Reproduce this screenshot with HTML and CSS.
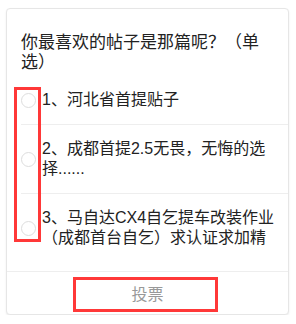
FILE: index.html
```html
<!DOCTYPE html>
<html lang="zh-CN">
<head>
    <meta charset="UTF-8">
    <meta name="viewport" content="width=device-width, initial-scale=1.0">
    <title>投票</title>
    <link rel="stylesheet" href="styles.css">
</head>
<body>

<div class="page">
    <!-- Vote card -->
    <div class="vote-card">
        <h2 class="vote-title">你最喜欢的帖子是那篇呢？（单选）</h2>
        <div class="options">
            <label class="option">
                <span class="radio"></span>
                <span class="option-text">1、河北省首提贴子</span>
            </label>
            <label class="option">
                <span class="radio"></span>
                <span class="option-text">2、成都首提2.5无畏，无悔的选择......</span>
            </label>
            <label class="option">
                <span class="radio"></span>
                <span class="option-text">3、马自达CX4自乞提车改装作业（成都首台自乞）求认证求加精</span>
            </label>
        </div>
        <div class="vote-footer">
            <button class="vote-btn">投票</button>
        </div>
    </div>

    <!-- annotation boxes -->
    <div class="mark mark-radios"></div>
    <div class="mark mark-button"></div>
</div>

</body>
</html>
```

FILE: styles.css
```css
body {
    margin: 0;
    background-color: #fff;
    font-family: "Liberation Sans", "Noto Sans CJK SC", sans-serif;
    color: #222;
}
.page {
    position: relative;
    padding: 8px 7px 0 6px;
}
.vote-card {
    border: 1px solid #e6e6e6;
    border-radius: 4px;
    box-shadow: 0 1px 2px rgba(0,0,0,0.08);
    background-color: #fff;
}
.vote-title {
    margin: 0 0 3px 0;
    padding: 24px 13px 0 14px;
    font-size: 17px;
    font-weight: normal;
    line-height: 20px;
}
.options {
    margin-left: 14px;
    padding-bottom: 9px;
}
.option {
    display: flex;
    align-items: center;
    gap: 6px;
    padding: 14px 13px 14px 0;
    border-bottom: 1px solid #eee;
    font-size: 16px;
    line-height: 20px;
}
.option:last-child {
    border-bottom: none;
}
.radio {
    flex: none;
    width: 13px;
    height: 13px;
    border: 1px solid #ddd;
    border-radius: 50%;
}
.vote-footer {
    border-top: 1px solid #eee;
    display: flex;
    justify-content: center;
}
.vote-btn {
    border: none;
    background: none;
    font-family: inherit;
    font-size: 16px;
    color: #999;
    height: 42px;
    padding: 0 20px;
}
.mark {
    position: absolute;
    border: 3px solid #ff3838;
}
.mark-radios {
    left: 14px;
    top: 87px;
    width: 21px;
    height: 149px;
}
.mark-button {
    left: 73px;
    top: 277px;
    width: 139px;
    height: 29px;
}
```
